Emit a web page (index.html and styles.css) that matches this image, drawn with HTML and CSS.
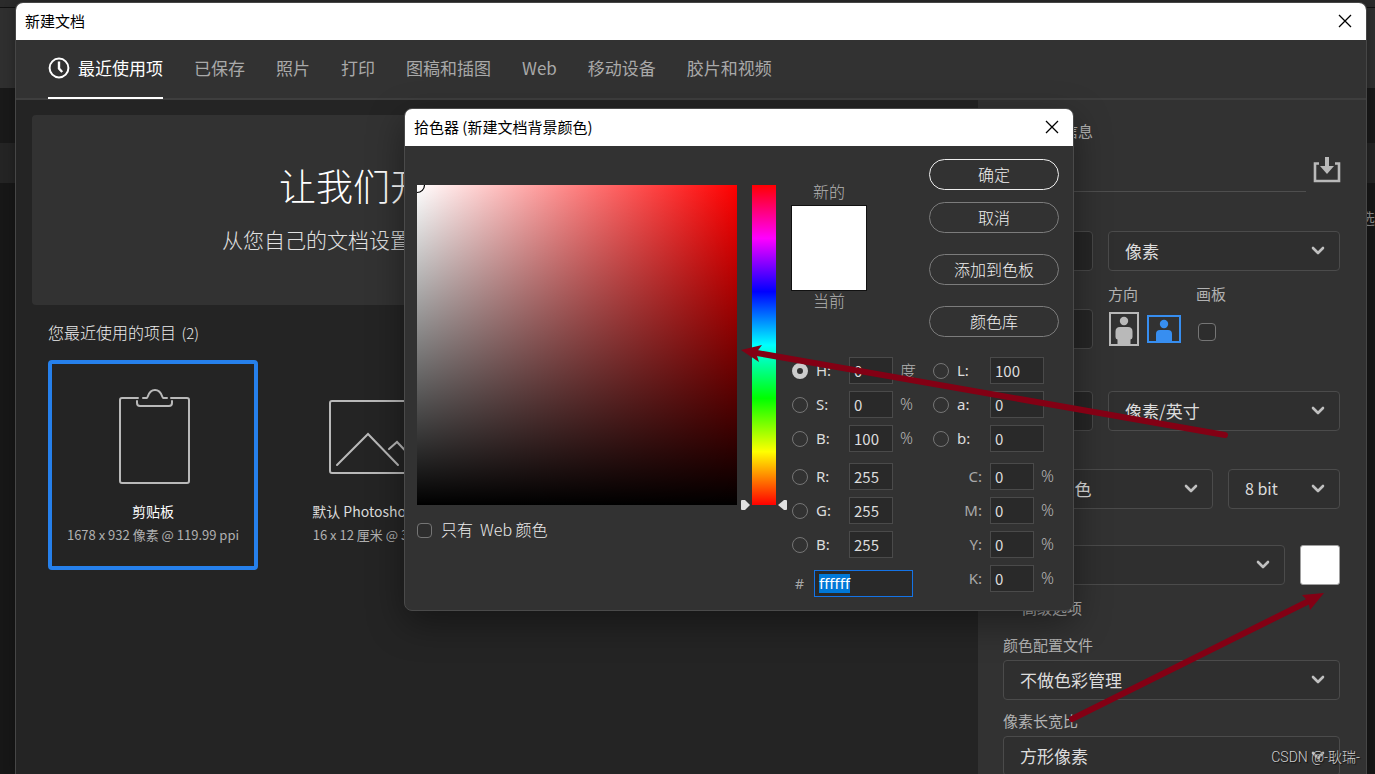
FILE: index.html
```html
<!DOCTYPE html>
<html lang="zh-CN">
<head>
<meta charset="utf-8">
<title>新建文档</title>
<link rel="stylesheet" href="styles.css">
</head>
<body>
<span class="behind">选</span>
<main class="window">
  <header class="titlebar">
    <h1 class="title">新建文档</h1>
    <button class="close" aria-label="关闭"><svg width="14" height="14" viewBox="0 0 14 14"><path d="M1 1L13 13M13 1L1 13"/></svg></button>
  </header>
  <nav class="tabs">
    <button class="tab active"><svg width="22" height="22" viewBox="0 0 22 22"><circle cx="11" cy="11" r="9.4"/><path d="M11 4.5V11.5L14.2 15" stroke-width="2.4"/></svg>最近使用项</button>
    <button class="tab">已保存</button>
    <button class="tab">照片</button>
    <button class="tab">打印</button>
    <button class="tab">图稿和插图</button>
    <button class="tab">Web</button>
    <button class="tab">移动设备</button>
    <button class="tab">胶片和视频</button>
  </nav>
  <div class="columns">
    <section class="browse">
      <div class="banner">
        <h2 class="banner-title">让我们开</h2>
        <p class="banner-text">从您自己的文档设置</p>
      </div>
      <h3 class="recent-title">您最近使用的项目 <span>(2)</span></h3>
      <div class="cards">
        <button class="card selected">
          <svg class="card-icon" width="100" height="100" viewBox="0 0 100 100"><path d="M35 10H19q-2 0-2 2v81q0 2 2 2h65q2 0 2-2V12q0-2-2-2H68"/><path d="M40 10h4c1 0 1-8 8-8s7 8 8 8h4M34 13v2q0 3 3 3h29q3 0 3-3v-2"/></svg>
          <span class="card-name">剪贴板</span>
          <span class="card-info">1678 x 932 像素 @ 119.99 ppi</span>
        </button>
        <button class="card">
          <svg class="card-icon" width="100" height="100" viewBox="0 0 100 100"><rect x="1" y="13" width="98" height="72" rx="2"/><path d="M8 77L39 46L69 77M60 61L68 54L90 77"/></svg>
          <span class="card-name">默认 Photoshop 大小</span>
          <span class="card-info">16 x 12 厘米 @ 300 ppi</span>
        </button>
      </div>
    </section>
    <aside class="panel">
      <label class="caption" for="doc-name">预设详细信息</label>
      <div class="name-row">
        <input class="doc-name" id="doc-name" type="text">
        <button class="save" aria-label="保存预设"><svg width="28" height="28" viewBox="0 0 28 28"><path d="M6 7.5H2V25H26V7.5H22" fill="none" stroke="#b9b9b9" stroke-width="2.6"/><path d="M12 1h4v9h5l-7 8-7-8h5z" fill="#b9b9b9"/></svg></button>
      </div>
      <label class="caption" for="width">宽度</label>
      <div class="row">
        <input class="number" id="width" type="text">
        <div class="drop"><select aria-label="单位"><option>像素</option></select><svg class="chev" width="14" height="10" viewBox="0 0 14 10"><path d="M2 2l5 5 5-5"/></svg></div>
      </div>
      <div class="row captions">
        <label class="caption" for="height">高度</label>
        <span class="caption orient-cap">方向</span>
        <label class="caption" for="artboard">画板</label>
      </div>
      <div class="row">
        <input class="number" id="height" type="text">
        <div class="orient">
          <button aria-label="纵向"><svg width="32" height="34" viewBox="0 0 32 34"><rect x="2" y="1" width="28" height="32" fill="none" stroke="#b9b9b9" stroke-width="2"/><circle cx="16" cy="9" r="4.2" fill="#b9b9b9"/><path d="M12 15h8q4.500 0 4.500 4.500V25q0 2-2 2.500v5h-13v-5q-2-.5-2-2.500v-5.500Q7.500 15 12 15z" fill="#b9b9b9"/></svg></button>
          <button aria-label="横向"><svg width="34" height="34" viewBox="0 0 34 34"><rect x="1" y="4" width="32" height="26" fill="none" stroke="#378ef0" stroke-width="2"/><circle cx="17" cy="12" r="4.200" fill="#378ef0"/><path d="M13 18h8q4 0 4 4v8H9v-8q0-4 4-4z" fill="#378ef0"/></svg></button>
        </div>
        <input class="check" id="artboard" type="checkbox">
      </div>
      <label class="caption late" for="res">分辨率</label>
      <div class="row">
        <input class="number" id="res" type="text">
        <div class="drop"><select aria-label="分辨率单位"><option>像素/英寸</option></select><svg class="chev" width="14" height="10" viewBox="0 0 14 10"><path d="M2 2l5 5 5-5"/></svg></div>
      </div>
      <label class="caption mode-cap" for="mode">颜色模式</label>
      <div class="row">
        <div class="drop"><select id="mode"><option>RGB 颜色</option></select><svg class="chev" width="14" height="10" viewBox="0 0 14 10"><path d="M2 2l5 5 5-5"/></svg></div>
        <div class="drop depth"><select aria-label="位深"><option>8 bit</option></select><svg class="chev" width="14" height="10" viewBox="0 0 14 10"><path d="M2 2l5 5 5-5"/></svg></div>
      </div>
      <label class="caption bg-cap" for="bg">背景内容</label>
      <div class="row">
        <div class="drop"><select id="bg"><option>自定义</option></select><svg class="chev" width="14" height="10" viewBox="0 0 14 10"><path d="M2 2l5 5 5-5"/></svg></div>
        <button class="swatch" aria-label="背景颜色"></button>
      </div>
      <button class="advanced"><svg class="chev" width="10" height="8" viewBox="0 0 14 10"><path d="M2 2l5 5 5-5"/></svg>高级选项</button>
      <label class="caption profile-cap" for="profile">颜色配置文件</label>
      <div class="row">
        <div class="drop"><select id="profile"><option>不做色彩管理</option></select><svg class="chev" width="14" height="10" viewBox="0 0 14 10"><path d="M2 2l5 5 5-5"/></svg></div>
      </div>
      <label class="caption aspect-cap" for="aspect">像素长宽比</label>
      <div class="row">
        <div class="drop"><select id="aspect"><option>方形像素</option></select><svg class="chev" width="14" height="10" viewBox="0 0 14 10"><path d="M2 2l5 5 5-5"/></svg></div>
      </div>
    </aside>
  </div>
</main>

<section class="picker" role="dialog" aria-label="拾色器">
  <header class="titlebar">
    <h2 class="title">拾色器 (新建文档背景颜色)</h2>
    <button class="close" aria-label="关闭"><svg width="14" height="14" viewBox="0 0 14 14"><path d="M1 1L13 13M13 1L1 13"/></svg></button>
  </header>
  <div class="picker-body">
    <div class="field-col">
      <div class="field"><svg width="10" height="10" viewBox="0 0 10 10"><path d="M7.500 0A7.500 7.500 0 0 1 0 7.500" fill="none" stroke="#000" stroke-width="1.200"/></svg></div>
      <label class="webonly"><input class="check small" type="checkbox">只有&nbsp; Web 颜色</label>
    </div>
    <div class="hue-col">
      <div class="hue"></div>
      <svg class="hue-arrows" width="46" height="10" viewBox="0 0 46 10" fill="#e0e0e0"><path d="M1 0h3l5 5-5 5H1q-1 0-1-1V1q0-1 1-1z"/><path d="M45 0h-2l-6 5 6 5h2q1 0 1-1V1q0-1-1-1z"/></svg>
    </div>
    <div class="controls">
      <div class="top">
        <div class="compare"><span>新的</span><div class="preview"></div><span>当前</span></div>
        <div class="buttons">
          <button class="pill primary">确定</button>
          <button class="pill">取消</button>
          <button class="pill spaced">添加到色板</button>
          <button class="pill spaced">颜色库</button>
        </div>
      </div>
      <div class="values">
        <div class="list">
          <div class="value"><input class="radio" type="radio" name="ch" id="rh" checked><label for="rh">H:</label><input class="num" aria-label="H" value="0"><span>度</span></div>
          <div class="value"><input class="radio" type="radio" name="ch" id="rs"><label for="rs">S:</label><input class="num" aria-label="S" value="0"><span>%</span></div>
          <div class="value"><input class="radio" type="radio" name="ch" id="rb"><label for="rb">B:</label><input class="num" aria-label="B" value="100"><span>%</span></div>
          <div class="value group"><input class="radio" type="radio" name="ch" id="rr"><label for="rr">R:</label><input class="num" aria-label="R" value="255"></div>
          <div class="value"><input class="radio" type="radio" name="ch" id="rg"><label for="rg">G:</label><input class="num" aria-label="G" value="255"></div>
          <div class="value"><input class="radio" type="radio" name="ch" id="rbb"><label for="rbb">B:</label><input class="num" aria-label="B" value="255"></div>
          <div class="hex"><label for="hex">#</label><div class="hexbox"><span class="picked" id="hex" role="textbox" tabindex="0">ffffff</span></div></div>
        </div>
        <div class="list">
          <div class="value"><input class="radio" type="radio" name="ch" id="rl"><label for="rl">L:</label><input class="num wide" aria-label="L" value="100"></div>
          <div class="value"><input class="radio" type="radio" name="ch" id="ra"><label for="ra">a:</label><input class="num wide" aria-label="a" value="0"></div>
          <div class="value"><input class="radio" type="radio" name="ch" id="rlb"><label for="rlb">b:</label><input class="num wide" aria-label="b" value="0"></div>
          <div class="value ink group"><label for="c">C:</label><input class="num" id="c" value="0"><span>%</span></div>
          <div class="value ink"><label for="m">M:</label><input class="num" id="m" value="0"><span>%</span></div>
          <div class="value ink"><label for="y">Y:</label><input class="num" id="y" value="0"><span>%</span></div>
          <div class="value ink"><label for="k">K:</label><input class="num" id="k" value="0"><span>%</span></div>
        </div>
      </div>
    </div>
  </div>
</section>

<svg class="arrows" width="1375" height="774" viewBox="0 0 1375 774" fill="#830014" stroke="#830014">
  <path d="M757 353L1225 435M1072 719L1309 601" stroke-width="6" stroke-linecap="round" fill="none"/>
  <path d="M741 350L762 345L756 353L759 362zM1324 593L1302 595L1308 601L1310 610z" stroke="none"/>
</svg>
<p class="mark">CSDN @-耿瑞-</p>
</body>
</html>
```
FILE: styles.css
```css
* { box-sizing: border-box; margin: 0; }
html { height: 100%; }
body {
  position: relative;
  height: 100vh;
  overflow: hidden;
  font-family: "Noto Sans CJK SC", sans-serif;
  color: #dcdcdc;
  background: linear-gradient(#2b2b2b 7px, #111 7px, #111 8px, #2f2f2f 8px, #2f2f2f 88px, #191919 88px, #191919 143px, #242424 143px, #242424 183px, #171717 183px);
}
button, input, select { font: inherit; color: inherit; border: 0; padding: 0; background: none; }
svg { display: block; }

.behind { position: absolute; right: 0; top: 208px; font-size: 15px; line-height: 20px; color: #8a8a8a; }

.window {
  position: relative;
  display: flex;
  flex-direction: column;
  height: calc(100vh - 2px);
  margin: 2px 8px 0 15px;
  border: 1px solid #464646;
  border-bottom: 0;
  border-radius: 8px 8px 0 0;
  overflow: hidden;
  background: #323232;
  box-shadow: 0 0 12px rgba(0, 0, 0, .3);
}
.titlebar {
  display: flex;
  flex: none;
  align-items: center;
  justify-content: space-between;
  height: 37px;
  padding: 0 14px 2px 9px;
  background: #fff;
  color: #000;
}
.title { font-size: 15px; font-weight: 400; line-height: 20px; }
.close svg { fill: none; stroke: #000; stroke-width: 1.3; }

.tabs {
  display: flex;
  flex: none;
  gap: 31px;
  height: 60px;
  padding: 0 32px;
  border-bottom: 2px solid #3e3e3e;
  font-size: 17px;
  line-height: 24px;
  color: #a9a9a9;
}
.tab { position: relative; display: flex; align-items: center; gap: 8px; height: 58px; padding-bottom: 2px; white-space: nowrap; }
.tab svg { fill: none; stroke: #fff; stroke-width: 2; }
.tab.active { color: #fff; }
.tab.active::after { content: ""; position: absolute; left: 0; right: 0; bottom: -1px; height: 2px; background: #fff; }

.columns { display: grid; grid-template-columns: minmax(0, 1fr) 388px; flex: 1; min-height: 0; }
.browse { padding: 15px 16px; background: #242424; overflow: hidden; }
.banner { height: 190px; padding: 42px 0 0 190px; border-radius: 4px; background: #323232; overflow: hidden; white-space: nowrap; }
.banner-title { padding-left: 57px; font-size: 37px; font-weight: 300; line-height: 56px; color: #fff; }
.banner-text { margin-top: 10px; font-size: 21px; font-weight: 300; line-height: 32px; color: #e2e2e2; }
.recent-title { margin: 15px 0 0 16px; font-size: 16px; font-weight: 300; line-height: 24px; color: #ececec; }
.recent-title span { margin-left: 2px; font-size: 15px; }
.cards { display: flex; gap: 16px; margin: 15px 0 0 16px; }
.card { display: flex; flex: none; flex-direction: column; align-items: center; width: 210px; height: 210px; padding-top: 24px; border: 4px solid transparent; border-radius: 4px; white-space: nowrap; line-height: 24px; color: #dcdcdc; }
.card.selected { border-color: #2680eb; color: #fff; }
.card-icon { fill: none; stroke: #b9b9b9; stroke-width: 2; stroke-linecap: round; }
.card-name { margin-top: 11px; font-size: 14px; }
.card-info { font-size: 13px; color: #b0b0b0; }

.panel { display: flex; flex-direction: column; padding: 21px 26px 0 25px; background: #323232; }
.panel > * { flex: none; }
.caption { font-size: 15px; line-height: 20px; color: #b2b2b2; }
.name-row { display: flex; gap: 7px; height: 42px; margin: 9px 0 16px; }
.doc-name { flex: 1; min-width: 0; height: 42px; border-bottom: 1px solid #4e4e4e; }
.save { margin-top: -2px; width: 27px; }
.row { display: flex; gap: 15px; margin-top: 3px; height: 40px; align-items: center; }
.captions { height: 20px; margin: 13px 0 2px; }
.captions .caption:first-child { width: 90px; }
.orient-cap { width: 73px; }
.number { width: 90px; height: 40px; border: 1px solid #484848; border-radius: 4px; background: #262626; }
.drop { display: grid; flex: 1; align-items: center; }
.drop select { grid-area: 1 / 1; width: 100%; height: 40px; padding: 0 16px 2px; border: 1px solid #4b4b4b; border-radius: 4px; appearance: none; background: #2f2f2f; font-size: 17px; }
.drop .chev { grid-area: 1 / 1; justify-self: end; margin-right: 15px; }
.chev { fill: none; stroke: #c0c0c0; stroke-width: 2.6; stroke-linecap: round; stroke-linejoin: round; }
.drop.depth { flex: none; width: 112px; }
.depth select { font-size: 16px; }
.orient { display: flex; gap: 7px; width: 75px; }
.check { appearance: none; width: 18px; height: 18px; margin-top: 6px; border: 1px solid #757575; border-radius: 4px; background: #2d2d2d; }
.late { margin-top: 19px; }
.mode-cap { margin-top: 15px; }
.bg-cap { margin-top: 13px; }
.swatch { width: 40px; height: 40px; border: 1px solid #a0a0a0; border-radius: 3px; background: #fff; }
.advanced { display: flex; gap: 6px; align-items: center; margin: 13px 0 0 3px; font-size: 15px; line-height: 20px; color: #b2b2b2; }
.profile-cap { margin: 17px 0 2px; }
.aspect-cap { margin: 11px 0 2px; }

.picker {
  position: absolute;
  left: 404px;
  top: 108px;
  width: 670px;
  border: 1px solid #4a4a4a;
  border-radius: 8px;
  overflow: hidden;
  background: #323232;
  box-shadow: 0 12px 36px rgba(0, 0, 0, .4);
}
.picker-body { display: flex; padding: 13px 14px 13px 12px; font-family: "Noto Sans", "Noto Sans CJK SC", sans-serif; font-size: 14px; }
.field-col { width: 320px; padding-top: 26px; }
.field { height: 320px; background: linear-gradient(to top, #000, transparent), linear-gradient(to right, #fff, #f00); }
.webonly { display: flex; align-items: center; gap: 9px; margin-top: 12px; font-family: "Noto Sans CJK SC", sans-serif; font-size: 16px; font-weight: 300; line-height: 24px; color: #ececec; }
.check.small { width: 15px; height: 15px; margin-top: 2px; }
.hue-col { display: flex; flex-direction: column; align-items: center; width: 46px; margin: 26px 4px 0; }
.hue { width: 24px; height: 320px; background: linear-gradient(#f00, #f0f, #00f, #0ff, #0f0, #ff0, #f00); }
.hue-arrows { margin-top: -5px; }
.controls { flex: 1; }
.top { display: flex; justify-content: space-between; }
.compare { display: flex; flex-direction: column; align-items: center; margin-top: 23px; font-size: 16px; font-weight: 300; line-height: 20px; color: #b4b4b4; }
.compare span:first-child { padding-bottom: 3px; }
.preview { width: 76px; height: 86px; border: 1px solid #111; background: #fff; }
.buttons { display: flex; flex-direction: column; gap: 12px; }
.pill { width: 130px; height: 31px; border: 1px solid #7c7c7c; border-radius: 16px; font-size: 16px; font-weight: 300; line-height: 24px; color: #f0f0f0; }
.pill.primary { border-color: #eee; }
.pill.spaced { margin-top: 9px; }
.values { display: flex; justify-content: space-between; margin-top: 20px; }
.list { display: flex; flex-direction: column; gap: 7px; padding-left: 1px; }
.list:last-child { width: 127px; }
.value { display: flex; align-items: center; height: 27px; }
.value label { width: 33px; padding-bottom: 1px; font-size: 15px; }
.value.group { margin-top: 4px; }
.value span { margin-left: 7px; padding-bottom: 2px; color: #b4b4b4; font-size: 16px; font-weight: 300; }
.radio { appearance: none; width: 16px; height: 16px; margin-right: 8px; border: 1px solid #757575; border-radius: 50%; }
.radio:checked { border: 5px solid #ccc; }
.num { width: 44px; height: 27px; padding: 0 0 0 4px; border: 1px solid #4a4a4a; background: #292929; font-family: "Noto Sans CJK SC", sans-serif; font-size: 15px; }
.num.wide { width: 54px; }
.ink label { width: 49px; margin-right: 8px; text-align: right; color: #a9a9a9; }
.hex { display: flex; align-items: center; gap: 10px; margin: 5px 0 0 3px; color: #a9a9a9; }
.hexbox { display: flex; align-items: center; width: 99px; height: 27px; padding-left: 4px; border: 1px solid #1473e6; background: #292929; }
.picked { line-height: 19px; font-size: 15px; background: #0078d7; color: #fff; }

.arrows { position: absolute; left: 0; top: 0; pointer-events: none; }
.mark { position: absolute; right: 15px; bottom: 7px; font-family: Roboto, "Noto Sans CJK SC", sans-serif; font-size: 14px; font-weight: 300; line-height: 20px; color: #d0d0d0; text-shadow: 1px 1px 1px #111; }
```
